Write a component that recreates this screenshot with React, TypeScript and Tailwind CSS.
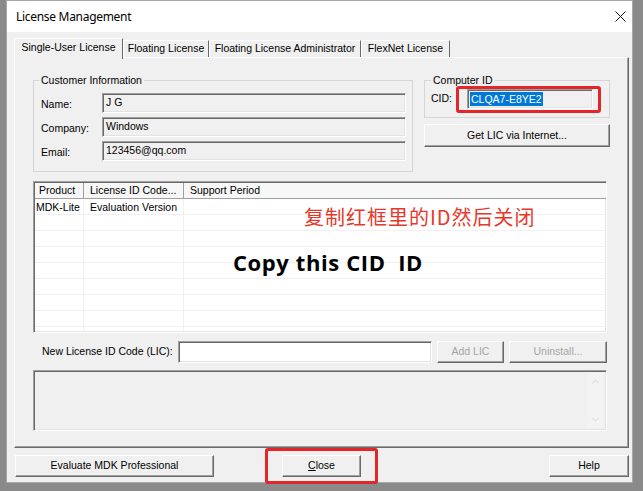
import React from 'react'
import { ChevronDown, ChevronUp } from 'lucide-react'

const raised =
  'border border-t-white border-l-white border-b-[#696969] border-r-[#696969] shadow-[inset_-1px_-1px_0_#a0a0a0] bg-[#f0f0f0]'
const sunken =
  'border border-t-[#a0a0a0] border-l-[#a0a0a0] border-b-white border-r-white shadow-[inset_1px_1px_0_#696969,inset_-1px_-1px_0_#e3e3e3]'

const tabs = [
  { label: 'Single-User License', w: 'w-[109px]', active: true },
  { label: 'Floating License', w: 'w-[86px]', active: false },
  { label: 'Floating License Administrator', w: 'w-[152px]', active: false },
  { label: 'FlexNet License', w: 'w-[89px]', active: false },
]

const customer = [
  { label: 'Name:', value: 'J G' },
  { label: 'Company:', value: 'Windows' },
  { label: 'Email:', value: '123456@qq.com' },
]

const Button = ({ className, children, disabled }: { className: string; children: React.ReactNode; disabled?: boolean }) => (
  <div className={`${raised} ${className} flex items-center justify-center ${disabled ? 'text-[#a5a5a5]' : 'text-black'}`}>
    {children}
  </div>
)

const ListView = () => {
  const rows = Array.from({ length: 9 })
  return (
    <div className={`${sunken} relative w-[574px] h-[152px] bg-white overflow-hidden pt-[1px] pl-[1px]`}>
      <div className="flex h-[16px] bg-[#f7f7f7] border-b border-[#a0a0a0]">
        <div className="w-[49px] pl-[4px] border-r border-[#a0a0a0] leading-[15px]">Product</div>
        <div className="w-[100px] pl-[6px] border-r border-[#a0a0a0] leading-[15px]">License ID Code...</div>
        <div className="flex-1 pl-[6px] leading-[15px]">Support Period</div>
      </div>
      {rows.map((_, i) => (
        <div key={i} className="flex h-[16px] border-b border-[#f0f0f0]">
          <div className="w-[49px] pl-[1px] border-r border-[#f0f0f0] leading-[16px]">{i === 0 ? 'MDK-Lite' : ''}</div>
          <div className="w-[100px] pl-[6px] border-r border-[#f0f0f0] leading-[16px]">{i === 0 ? 'Evaluation Version' : ''}</div>
          <div className="flex-1" />
        </div>
      ))}
      <div className="absolute left-[270px] top-[22px] text-[20px] tracking-[1px] leading-[26px] text-[#e5392c] font-['Noto_Sans_CJK_SC','Noto_Sans',sans-serif]">
        复制红框里的ID然后关闭
      </div>
      <div className="absolute left-[199px] top-[64px] text-[22px] tracking-[0.6px] leading-[32px] font-bold text-black whitespace-pre font-['Open_Sans',sans-serif]">
        Copy this CID  ID
      </div>
    </div>
  )
}

export default function App() {
  return (
    <div className="w-[643px] h-[491px] bg-[#8a8a8a] overflow-hidden text-[10.5px] text-black font-['Liberation_Sans',Arial,sans-serif]">
      <div className="ml-[6px] w-[627px] h-[483px] border border-[#a8a8a8] bg-[#f0f0f0] flex flex-col">
        {/* title bar */}
        <div className="h-[31px] bg-white flex items-center justify-between pl-[9px] pr-[6px]">
          <span className="text-[12px] tracking-[-0.3px] font-['Noto_Sans',sans-serif]">License Management</span>
          <svg width="11" height="11" viewBox="0 0 11 11">
            <path d="M0.5 0.5 L10.5 10.5 M10.5 0.5 L0.5 10.5" stroke="#111" strokeWidth="1" />
          </svg>
        </div>

        <div className="flex flex-col pt-[6px] pl-[7px] pr-[3px]">
          {/* tabs */}
          <div className="flex items-end h-[19px]">
            {tabs.map((t) =>
              t.active ? (
                <div
                  key={t.label}
                  className={`${t.w} relative z-10 h-[21px] -mb-[2px] bg-[#f0f0f0] border-t border-l border-r border-t-white border-l-white border-r-[#696969] flex items-center justify-center pb-[3px]`}
                >
                  {t.label}
                </div>
              ) : (
                <div
                  key={t.label}
                  className={`${t.w} h-[17px] bg-[#f0f0f0] border-t border-l border-r border-t-white border-l-white border-r-[#696969] flex items-center justify-center`}
                >
                  {t.label}
                </div>
              )
            )}
          </div>

          {/* tab panel */}
          <div className="h-[391px] w-[615px] border border-t-white border-l-white border-b-[#696969] border-r-[#696969] shadow-[inset_-1px_-1px_0_#a0a0a0] pt-[16px] pl-[18px] flex flex-col">
            <div className="flex gap-[11px]">
              <fieldset className="w-[380px] border border-[#d5d5d5] m-0 pb-[10px] min-w-0">
                <legend className="ml-[5px] px-[2px] leading-[13px]">Customer Information</legend>
                <div className="mt-[6px] flex flex-col gap-[4px] pl-[7px]">
                  {customer.map((c) => (
                    <div key={c.label} className="flex items-center h-[20px]">
                      <div className="w-[61px] pt-[3px]">{c.label}</div>
                      <div className={`${sunken} w-[304px] h-[20px] bg-[#f0f0f0] pl-[3px] flex items-center`}>{c.value}</div>
                    </div>
                  ))}
                </div>
              </fieldset>

              <div className="w-[186px] flex flex-col">
                <fieldset className="border border-[#d5d5d5] m-0 pb-[8px] min-w-0">
                  <legend className="ml-[6px] px-[2px] leading-[13px]">Computer ID</legend>
                  <div className="mt-[2px] flex items-center pl-[6px]">
                    <div className="w-[36px]">CID:</div>
                    <div className="relative">
                      <div className={`${sunken} w-[126px] h-[20px] bg-[#f0f0f0] pl-[2px] flex items-center`}>
                        <span className="bg-[#0078d7] text-white leading-[14px] px-[1px]">CLQA7-E8YE2</span>
                      </div>
                      <div className="absolute -left-[11px] -right-[8px] -top-[3px] -bottom-[4px] border-[3px] border-[#e3262a] rounded-[3px]" />
                    </div>
                  </div>
                </fieldset>
                <Button className="mt-[6px] h-[23px] w-full">Get LIC via Internet...</Button>
              </div>
            </div>

            <div className="mt-[9px]">
              <ListView />
            </div>

            <div className="mt-[8px] flex items-center h-[22px]">
              <div className="w-[145px] pl-[9px]">New License ID Code (LIC):</div>
              <div className={`${sunken} w-[254px] h-[22px] bg-white`} />
              <Button className="ml-[5px] w-[67px] h-[22px]" disabled>
                Add LIC
              </Button>
              <Button className="ml-[5px] w-[98px] h-[22px]" disabled>
                Uninstall...
              </Button>
            </div>

            <div className={`${sunken} mt-[7px] w-[574px] h-[61px] bg-[#f0f0f0] flex justify-end p-[2px]`}>
              <div className="w-[17px] h-full bg-[#f3f3f3] flex flex-col items-center justify-between py-[3px] text-[#c4c4c4]">
                <ChevronUp size={11} strokeWidth={1.5} />
                <ChevronDown size={11} strokeWidth={1.5} />
              </div>
            </div>
          </div>

          {/* bottom buttons */}
          <div className="mt-[7px] w-[615px] grid grid-cols-[1fr_auto_1fr] items-center">
            <Button className="ml-[1px] w-[199px] h-[22px] justify-self-start">Evaluate MDK Professional</Button>
            <div className="relative">
              <Button className="w-[79px] h-[22px]">
                <span>
                  <span className="underline">C</span>lose
                </span>
              </Button>
              <div className="absolute -left-[17px] -right-[17px] -top-[7px] -bottom-[7px] border-[3px] border-[#e3262a] rounded-[3px]" />
            </div>
            <Button className="w-[80px] h-[22px] justify-self-end">Help</Button>
          </div>
        </div>
      </div>
    </div>
  )
}
